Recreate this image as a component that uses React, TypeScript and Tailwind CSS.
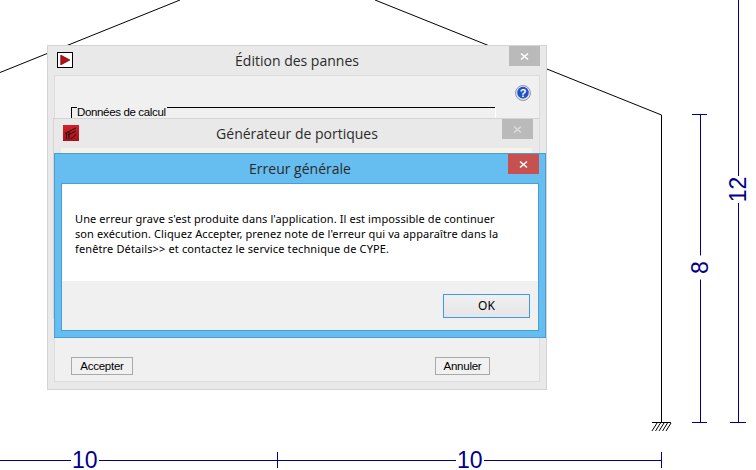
import type { ReactNode } from "react";

const BLUE = "#00008b";

function Drawing() {
  return (
    <svg className="absolute left-0 top-0" width="756" height="470" viewBox="0 0 756 470" fill="none" shapeRendering="crispEdges">
      <g stroke="#000" strokeWidth="1">
        <path d="M0 72.5L180 0" shapeRendering="auto" />
        <path d="M375 0L661.5 115" shapeRendering="auto" />
        <path d="M661.5 115V422.5" />
        <path d="M652 422.5H671" />
        <path d="M652 431L657 423M655.5 431L660.5 423M659 431L664 423M662.5 431L667.5 423M666 431L671 423" shapeRendering="auto" />
      </g>
      <g stroke={BLUE} strokeWidth="1">
        <path d="M700.5 114V422.5M692 114.5H707M692 422.5H707" />
        <path d="M738.5 0V422.5M730 422.5H746" />
        <path d="M0 460.5H661M277.5 452V468M661.5 452V468" />
      </g>
    </svg>
  );
}

function CloseButton({ bg, fg }: { bg: string; fg: string }) {
  return (
    <div className={`flex h-5 w-[31px] items-center justify-center justify-self-end ${bg}`}>
      <svg width="9" height="9" viewBox="0 0 9 9" stroke={fg} strokeWidth="1.6">
        <path d="M1 1.5L8 7.5M8 1.5L1 7.5" />
      </svg>
    </div>
  );
}

function TitleBar({ title, icon, close, pad }: { title: string; icon?: ReactNode; close: ReactNode; pad: string }) {
  return (
    <div className={`grid h-[29px] shrink-0 grid-cols-[1fr_auto_1fr] items-start ${pad}`}>
      <div>{icon}</div>
      <div className="flex h-[29px] items-center font-['Open_Sans',sans-serif] text-[14px] text-[#2b2b2b]">{title}</div>
      {close}
    </div>
  );
}

function DimLabel({ text, className }: { text: string; className: string }) {
  return (
    <span className={`absolute bg-white font-['Liberation_Sans',sans-serif] text-[23px] leading-[19px] text-[#00008b] ${className}`}>
      {text}
    </span>
  );
}

function LegacyButton({ text, className }: { text: string; className: string }) {
  return (
    <div className={`flex h-[18px] items-center justify-center border border-[#a8a8a8] bg-[#f1f1f1] pt-[1px] font-['Liberation_Sans',sans-serif] text-[11.5px] tracking-[-0.25px] text-black ${className}`}>
      {text}
    </div>
  );
}

export default function App() {
  return (
    <div className="relative h-[470px] w-[756px] overflow-hidden bg-white">
      <Drawing />
      <DimLabel text="10" className="left-[71px] top-[451px] px-[1px]" />
      <DimLabel text="10" className="left-[456px] top-[451px] px-[1px]" />
      <DimLabel text="8" className="left-[688px] top-[258px] w-6 -rotate-90 text-center" />
      <DimLabel text="12" className="left-[725px] top-[180px] w-[27px] -rotate-90 text-center" />

      {/* Édition des pannes */}
      <div className="absolute left-[47px] top-[45px] flex h-[345px] w-[500px] flex-col border border-[#d4d4d4] bg-[#e9e9e9] px-[6px] pb-[7px]">
        <TitleBar
          title="Édition des pannes"
          pad=""
          icon={
            <div className="ml-[3px] mt-[6px] flex h-4 w-4 items-center justify-center border border-black bg-white">
              <svg width="12" height="12" viewBox="0 0 12 12">
                <path d="M2 1.5L10.5 6L2 10.5Z" fill="#b0141c" stroke="#a01218" strokeWidth="1.4" strokeLinejoin="round" />
              </svg>
            </div>
          }
          close={<CloseButton bg="bg-[#bababa]" fg="#ffffff" />}
        />
        <div className="flex w-[486px] flex-1 flex-col border border-[#dcdcdc] bg-[#f0f0f0] pl-4">
          <svg className="mr-2 mt-[9px] self-end" width="16" height="16" viewBox="0 0 16 16">
            <circle cx="8" cy="8" r="7.5" fill="#dfe3ea" stroke="#7c8595" strokeWidth="0.8" />
            <circle cx="8" cy="7.6" r="5.8" fill="#1f52c8" />
            <text x="8" y="11.5" textAnchor="middle" fontFamily="Liberation Sans" fontWeight="700" fontSize="11" fill="#fff">?</text>
          </svg>
          <div className="relative mt-[6px] h-[12px] w-[424px] border-l border-t border-black">
            <div className="absolute right-[-1px] top-0 h-[10px] w-px bg-white" />
            <div className="absolute left-[5px] top-[-4px] bg-[#f0f0f0] pr-[1px] font-['Liberation_Sans',sans-serif] text-[11.5px] leading-[16px] tracking-[-0.35px] text-black">
              Données de calcul
            </div>
          </div>
          <div className="mt-auto flex justify-between pb-[6px] pr-[49px]">
            <LegacyButton text="Accepter" className="w-[62px]" />
            <LegacyButton text="Annuler" className="w-[55px]" />
          </div>
        </div>
      </div>

      {/* Générateur de portiques */}
      <div className="absolute left-[53px] top-[118px] flex h-[201px] w-[486px] flex-col border-l border-t border-[#d4d4d4] bg-[#e9e9e9]">
        <TitleBar
          title="Générateur de portiques"
          pad="pl-[7px] pr-[6px]"
          icon={
            <div className="ml-[2px] mt-[6px] h-4 w-4 bg-gradient-to-b from-[#d4202a] to-[#a81218]">
              <svg width="16" height="16" viewBox="0 0 16 16" fill="none" stroke="#111" strokeWidth="1">
                <path d="M2 8.5L13 3M3.5 14V8M6 14V7M5 10L13 6M8 14L13.5 9" />
              </svg>
            </div>
          }
          close={<CloseButton bg="bg-[#bababa]" fg="#dcdcdc" />}
        />
        <div className="ml-[7px] h-[6px] w-[471px] bg-[#f7f2e9]" />
      </div>

      {/* Erreur générale */}
      <div className="absolute left-[54px] top-[153px] flex h-[185px] w-[492px] flex-col border border-[#4a9dcf] bg-[#66bdef]">
        <TitleBar
          title="Erreur générale"
          pad="px-[6px]"
          close={<CloseButton bg="bg-[#c75050]" fg="#ffffff" />}
        />
        <div className="ml-[6px] flex h-[148px] w-[478px] flex-col border border-[#4a9dcf] bg-white">
          <div className="h-[97px] shrink-0 px-[13px] pt-[27px] font-['Noto_Sans',sans-serif] text-[11px] leading-[15px] text-black">
            <p className="whitespace-nowrap tracking-[0.1px]">Une erreur grave s&apos;est produite dans l&apos;application. Il est impossible de continuer</p>
            <p className="whitespace-nowrap tracking-[0.1px]">son exécution. Cliquez Accepter, prenez note de l&apos;erreur qui va apparaître dans la</p>
            <p className="whitespace-nowrap tracking-[0.13px]">fenêtre Détails&gt;&gt; et contactez le service technique de CYPE.</p>
          </div>
          <div className="flex flex-1 items-start justify-end bg-[#f0f0f0] pr-2 pt-[13px]">
            <div className="flex h-6 w-[87px] items-center justify-center border border-[#3c9ae8] bg-gradient-to-b from-[#f0f0f0] to-[#e5e5e5] font-['Noto_Sans',sans-serif] text-[12px] text-black">
              OK
            </div>
          </div>
        </div>
      </div>
    </div>
  );
}
